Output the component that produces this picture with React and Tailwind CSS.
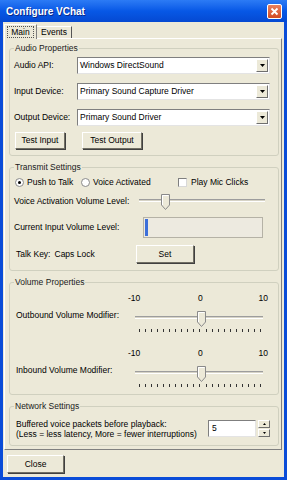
import React from "react";

const ticks = Array.from({ length: 21 }, (_, i) => i);

function DropButton() {
  return (
    <div className="mr-px flex h-[13px] w-[12px] items-center justify-center border border-t-white border-l-white border-r-[#6F6F6F] border-b-[#6F6F6F] bg-[#ECE9D8]">
      <svg width="5" height="3" viewBox="0 0 5 3">
        <path d="M0 0H5L2.5 3Z" fill="#000" />
      </svg>
    </div>
  );
}

function Combo({ value }) {
  return (
    <div className="flex h-[17px] w-[193px] items-center border border-t-[#7F7F7F] border-l-[#7F7F7F] border-r-[#E4E4E4] border-b-[#E4E4E4] bg-white">
      <span className="flex-1 pl-[2px] leading-none">{value}</span>
      <DropButton />
    </div>
  );
}

function Button({ children, className }) {
  return (
    <div
      className={
        "flex items-center justify-center border border-t-white border-l-white border-r-[#716F64] border-b-[#716F64] bg-[#ECE9D8] shadow-[1px_1px_0_#404040] " +
        className
      }
    >
      {children}
    </div>
  );
}

function Thumb() {
  return (
    <svg width="9" height="16" viewBox="0 0 9 16">
      <path d="M0.5 0.5H8.5V11L4.5 15.5L0.5 11Z" fill="#ECE9D8" stroke="#8A8A8A" />
      <path d="M1.5 11V1.5H7.5" fill="none" stroke="#fff" />
    </svg>
  );
}

function Track({ left, width, thumb }) {
  return (
    <div className="relative h-[15px]">
      <div
        className="absolute top-[5px] h-[3px] border-t border-t-[#9D9D9D] border-b border-b-white bg-[#D6D3C6]"
        style={{ left, width }}
      />
      <div className="absolute top-0" style={{ left: thumb }}>
        <Thumb />
      </div>
    </div>
  );
}

function Group({ title, className, children }) {
  return (
    <fieldset
      className={
        "ml-[4px] w-[270px] rounded-[3px] border border-[#D0D0BF] px-[4px] " +
        className
      }
    >
      <legend className="px-px leading-[12px] text-[#1A1A1A]">{title}</legend>
      {children}
    </fieldset>
  );
}

function VolumeBlock({ label, className }) {
  return (
    <div className={"flex " + className}>
      <div className="mt-[16px] w-[114px] pl-[2px] leading-[12px]">{label}</div>
      <div className="w-[140px]">
        <div className="relative flex h-[10px] items-center justify-between leading-none">
          <span>-10</span>
          <span className="absolute left-[70px]">0</span>
          <span>10</span>
        </div>
        <div className="mt-[8px]">
          <Track left={7} width={128} thumb={69} />
        </div>
        <div className="ml-[11px] mt-[3px] flex h-[3px] w-[122px] justify-between">
          {ticks.map((t) => (
            <div key={t} className="h-[3px] w-px bg-[#333]" />
          ))}
        </div>
      </div>
    </div>
  );
}

export default function App() {
  return (
    <div className="flex h-[480px] w-[287px] flex-col bg-[#0A4CD8] font-['Liberation_Sans',Arial,sans-serif] text-[8.5px] text-black">
      <div className="flex h-[22px] items-center justify-between bg-gradient-to-b from-[#2C7BF5] via-[#0758E6] to-[#0549D2] pl-[6px] pr-[5px]">
        <span className="text-[10px] font-bold text-white [text-shadow:1px_1px_0_#0A2A8A]">
          Configure VChat
        </span>
        <div className="flex h-[15px] w-[15px] items-center justify-center rounded-[2px] border border-white bg-gradient-to-b from-[#E8805E] to-[#D24A20]">
          <svg width="9" height="9" viewBox="0 0 9 9">
            <path d="M1.5 1.5L7.5 7.5M7.5 1.5L1.5 7.5" stroke="#fff" strokeWidth="1.8" />
          </svg>
        </div>
      </div>

      <div className="mx-[3px] mb-[3px] flex flex-1 flex-col bg-[#ECE9D8]">
        <div className="ml-px mt-[2px] flex h-[14px] items-end">
          <div className="relative z-10 -mb-px flex h-[15px] w-[33px] items-center justify-center border border-b-0 border-t-white border-l-white border-r-[#808080] bg-[#ECE9D8]">
            <span className="border border-dotted border-[#555] px-[3px] leading-[10px]">Main</span>
          </div>
          <div className="flex h-[12px] w-[35px] items-center justify-center border border-b-0 border-t-white border-l-0 border-r-[#555] leading-none">
            Events
          </div>
        </div>

        <div className="ml-px mr-[2px] flex h-[412px] flex-col border border-t-white border-l-white border-r-[#808080] border-b-[#808080] pb-[3px] pt-[3px]">
          <Group title="Audio Properties" className="pb-[6px] pt-[3px]">
            <div className="flex h-[17px] items-center">
              <span className="w-[63px]">Audio API:</span>
              <Combo value="Windows DirectSound" />
            </div>
            <div className="mt-[9px] flex h-[17px] items-center">
              <span className="w-[63px]">Input Device:</span>
              <Combo value="Primary Sound Capture Driver" />
            </div>
            <div className="mt-[9px] flex h-[17px] items-center">
              <span className="w-[63px]">Output Device:</span>
              <Combo value="Primary Sound Driver" />
            </div>
            <div className="ml-px mt-[6px] flex gap-[17px]">
              <Button className="h-[17px] w-[50px]">Test Input</Button>
              <Button className="h-[17px] w-[60px]">Test Output</Button>
            </div>
          </Group>

          <Group title="Transmit Settings" className="mt-[5px] pb-[7px] pt-[3px]">
            <div className="flex h-[12px] items-center">
              <div className="ml-px flex w-[66px] items-center gap-[3px]">
                <div className="flex h-[9px] w-[9px] items-center justify-center rounded-full border border-[#8A8A8A] bg-white">
                  <div className="h-[3px] w-[3px] rounded-full bg-black" />
                </div>
                <span>Push to Talk</span>
              </div>
              <div className="flex w-[97px] items-center gap-[3px]">
                <div className="h-[9px] w-[9px] rounded-full border border-[#8A8A8A] bg-white" />
                <span>Voice Activated</span>
              </div>
              <div className="flex items-center gap-[4px]">
                <div className="h-[9px] w-[9px] border border-t-[#7F7F7F] border-l-[#7F7F7F] border-r-[#D8D8D8] border-b-[#D8D8D8] bg-white" />
                <span>Play Mic Clicks</span>
              </div>
            </div>
            <div className="mt-[5px] flex h-[17px] items-center">
              <span className="w-[125px]">Voice Activation Volume Level:</span>
              <div className="w-[126px]">
                <Track left={0} width={126} thumb={22} />
              </div>
            </div>
            <div className="mt-[7px] flex h-[21px] items-center">
              <span className="w-[129px]">Current Input Volume Level:</span>
              <div className="flex h-[21px] w-[120px] border border-[#B5B2A6] bg-[#EDEAE0] p-px">
                <div className="w-[3px] bg-[#3C6FD9]" />
              </div>
            </div>
            <div className="mt-[7px] flex h-[18px] items-center">
              <span className="w-[122px] pl-[2px]">
                Talk Key:<span className="ml-[4px]">Caps Lock</span>
              </span>
              <Button className="h-[18px] w-[58px]">Set</Button>
            </div>
          </Group>

          <Group title="Volume Properties" className="mt-[5px] pb-[7px] pt-[5px]">
            <VolumeBlock label="Outbound Volume Modifier:" className="" />
            <VolumeBlock label="Inbound Volume Modifier:" className="mt-[16px]" />
          </Group>

          <Group title="Network Settings" className="mt-[5px] pb-[6px] pt-[7px]">
            <div className="flex items-start">
              <div className="w-[194px] pl-[2px] leading-[10px]">
                <div>Buffered voice packets before playback:</div>
                <div>(Less = less latency, More = fewer interruptions)</div>
              </div>
              <div className="mt-px flex h-[17px] w-[48px] items-center border border-t-[#7F7F7F] border-l-[#7F7F7F] border-r-[#E4E4E4] border-b-[#E4E4E4] bg-white pl-[3px]">
                5
              </div>
              <div className="ml-[2px] mt-px flex h-[17px] w-[12px] flex-col">
                <div className="flex h-[8px] items-center justify-center border border-t-white border-l-white border-r-[#6F6F6F] border-b-[#6F6F6F] bg-[#ECE9D8]">
                  <svg width="3" height="2" viewBox="0 0 3 2">
                    <path d="M0 2H3L1.5 0Z" fill="#000" />
                  </svg>
                </div>
                <div className="mt-px flex h-[8px] items-center justify-center border border-t-white border-l-white border-r-[#6F6F6F] border-b-[#6F6F6F] bg-[#ECE9D8]">
                  <svg width="3" height="2" viewBox="0 0 3 2">
                    <path d="M0 0H3L1.5 2Z" fill="#000" />
                  </svg>
                </div>
              </div>
            </div>
          </Group>
        </div>

        <Button className="ml-[4px] mt-[5px] h-[18px] w-[57px]">Close</Button>
      </div>
    </div>
  );
}
